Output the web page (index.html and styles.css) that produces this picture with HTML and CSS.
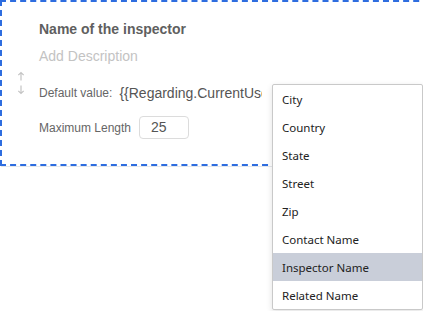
FILE: index.html
```html
<!DOCTYPE html>
<html>
<head>
<meta charset="utf-8">
<link rel="stylesheet" href="styles.css">
</head>
<body>
<div class="page">
  <div class="card">
    <div class="title">Name of the inspector</div>
    <div class="desc">Add Description</div>
    <div class="handle">
      <svg width="8" height="24" viewBox="0 0 8 24" fill="none" stroke="#c4c4c4" stroke-width="1.2">
        <path d="M4 1.5V9.5M1.3 4.2L4 1.5L6.7 4.2"/>
        <path d="M4 14.5V22.5M1.3 19.8L4 22.5L6.7 19.8"/>
      </svg>
    </div>
    <div class="row row-default">
      <span class="label">Default value:</span>
      <span class="value-input">{{Regarding.CurrentUser.Name}}</span>
    </div>
    <div class="row row-max">
      <span class="label">Maximum Length</span>
      <span class="num-input">25</span>
    </div>
  </div>
  <ul class="menu">
    <li>City</li>
    <li>Country</li>
    <li>State</li>
    <li>Street</li>
    <li>Zip</li>
    <li>Contact Name</li>
    <li class="active">Inspector Name</li>
    <li>Related Name</li>
  </ul>
</div>
</body>
</html>
```

FILE: styles.css
```css
html, body {
  margin: 0;
  padding: 0;
  background: #ffffff;
  overflow: hidden;
}
.page {
  position: relative;
  width: 423px;
  height: 311px;
  overflow: hidden;
  font-family: "Liberation Sans", Arial, sans-serif;
}
.card {
  box-sizing: border-box;
  width: 520px;
  height: 166px;
  border: 2px dashed #2e6ddf;
  padding: 17px 0 0 0;
  display: grid;
  grid-template-columns: 37px 1fr;
  grid-template-rows: auto auto auto auto;
  align-content: start;
  box-shadow: 0 2px 0 -1px #e4e7eb;
}
.title {
  grid-column: 2;
  grid-row: 1;
  font-size: 14px;
  line-height: 20px;
  font-weight: bold;
  color: #5f5f5f;
}
.desc {
  grid-column: 2;
  grid-row: 2;
  margin-top: 7px;
  font-size: 14px;
  line-height: 20px;
  color: #c3c3c3;
}
.handle {
  grid-column: 1;
  grid-row: 3;
  align-self: start;
  margin-top: 5px;
  padding-left: 15px;
  height: 24px;
}
.handle svg {
  display: block;
}
.row {
  grid-column: 2;
  display: flex;
  align-items: center;
}
.row-default {
  grid-row: 3;
  margin-top: 17px;
  height: 20px;
}
.row-max {
  grid-row: 4;
  margin-top: 13px;
  height: 23px;
}
.label {
  font-size: 12px;
  color: #666666;
  white-space: nowrap;
}
.value-input {
  margin-left: 7px;
  width: 143px;
  overflow: hidden;
  white-space: nowrap;
  font-size: 14px;
  line-height: 20px;
  color: #555555;
}
.num-input {
  box-sizing: border-box;
  margin-left: 8px;
  width: 50px;
  height: 23px;
  border: 1px solid #dcdcdc;
  border-radius: 4px;
  padding-left: 11px;
  font-size: 14px;
  line-height: 21px;
  color: #555555;
}
.menu {
  position: absolute;
  left: 272px;
  top: 84px;
  width: 149px;
  margin: 0;
  padding: 0;
  list-style: none;
  background: #ffffff;
  border: 1px solid #c9c9c9;
  border-radius: 2px;
  box-shadow: 0 2px 6px rgba(0, 0, 0, 0.12);
  font-family: "Noto Sans", "Open Sans", sans-serif;
  font-size: 11.5px;
  color: #222222;
}
.menu li {
  height: 28px;
  line-height: 29px;
  padding-left: 9px;
}
.menu li.active {
  background: #c9ced9;
}
```
